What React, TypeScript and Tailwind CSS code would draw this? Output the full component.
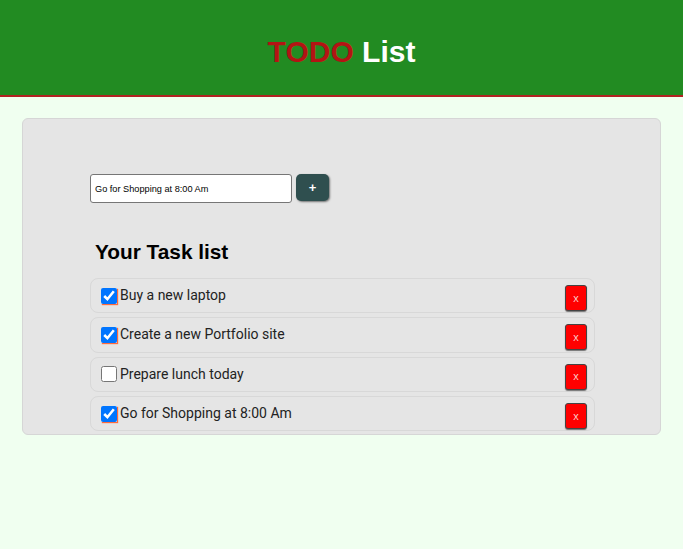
import React, { useState } from "react";

type Task = { id: number; text: string; done: boolean };

export default function App() {
  const [tasks, setTasks] = useState<Task[]>([
    { id: 1, text: "Buy a new laptop", done: true },
    { id: 2, text: "Create a new Portfolio site", done: true },
    { id: 3, text: "Prepare lunch today", done: false },
    { id: 4, text: "Go for Shopping at 8:00 Am", done: true },
  ]);
  const [value, setValue] = useState("Go for Shopping at 8:00 Am");

  const toggle = (id: number) =>
    setTasks((t) => t.map((x) => (x.id === id ? { ...x, done: !x.done } : x)));
  const remove = (id: number) => setTasks((t) => t.filter((x) => x.id !== id));
  const add = () => {
    if (!value.trim()) return;
    setTasks((t) => [...t, { id: Date.now(), text: value, done: false }]);
    setValue("");
  };

  return (
    <div className="min-h-screen bg-[#f0fff0] font-['Liberation_Sans',Arial,sans-serif]">
      <header className="h-[97px] bg-[#228b22] border-b-[2px] border-[#b22222] pt-[37px]">
        <h1 className="text-center text-[30px] leading-[30px] font-bold">
          <span className="text-[#b31414]">TODO</span>{" "}
          <span className="text-white">List</span>
        </h1>
      </header>

      <main className="mx-[22px] mt-[21px] h-[317px] rounded-[6px] border border-[#d6d6d6] bg-[#e5e5e5] pl-[67px] pt-[55px] pr-[66px]">
        <div className="flex items-start gap-[4px]">
          <input
            value={value}
            onChange={(e) => setValue(e.target.value)}
            className="h-[29px] w-[202px] rounded-[3px] border border-[#767676] bg-white px-[4px] text-[9.2px] text-black outline-none font-['Liberation_Sans',Arial,sans-serif]"
          />
          <button
            onClick={add}
            className="h-[27px] w-[33px] rounded-[5px] bg-[#2f4f4f] text-[13px] font-bold text-white shadow-[1px_1px_2px_rgba(0,0,0,0.5)]"
          >
            +
          </button>
        </div>

        <h2 className="mt-[37px] pl-[5px] text-[20.8px] leading-[24px] font-bold text-black">
          Your Task list
        </h2>

        <ul className="mt-[14px] flex w-[505px] flex-col gap-[4px]">
          {tasks.map((t) => (
            <li
              key={t.id}
              className="flex h-[35.3px] items-start justify-between rounded-[8px] border border-[#d8d8d8] bg-[#e5e5e5] pl-[6px] pr-[7px]"
            >
              <label className="flex items-center self-stretch">
                <input
                  type="checkbox"
                  checked={t.done}
                  onChange={() => toggle(t.id)}
                  className="ml-[4px] mr-[3px] h-[16px] w-[16px] accent-[#0075ff] checked:shadow-[1px_1px_1px_#ff6a3d]"
                />
                <span className="text-[14px] text-[#222] font-['Roboto',Arial,sans-serif]">
                  {t.text}
                </span>
              </label>
              <button
                onClick={() => remove(t.id)}
                className="mt-[6px] h-[26px] w-[22px] rounded-[3px] border border-[#444] bg-[#ff0000] text-[11px] text-[#f8c8c8] shadow-[0_1px_1px_rgba(0,0,0,0.5)]"
              >
                x
              </button>
            </li>
          ))}
        </ul>
      </main>
    </div>
  );
}
